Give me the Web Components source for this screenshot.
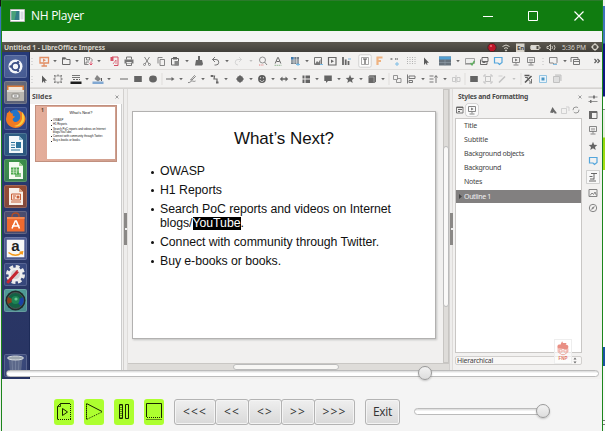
<!DOCTYPE html>
<html lang="en">
<head>
<meta charset="utf-8">
<title>NH Player</title>
<style>
html,body{margin:0;width:605px;height:431px;overflow:hidden;background:#fff;font-family:"Open Sans","Liberation Sans",sans-serif}
</style>
</head>
<body>
<desktop-view></desktop-view>
<script>
const ICONS = {
 drop:'<path d="M4.2 5h3.6L6 7.3z" fill="#555"/>',
 dropl:'<path d="M4.4 5h3.2L6 7z" fill="#bbb"/>',
 sep:'<path d="M6 0v12" stroke="#dddbd9"/>',
 grip:'<path d="M6 3v7" stroke="#bbb" stroke-dasharray="1 2"/>',
 impress:'<path d="M2 2.500h8.500v5.500H2zM6 8v3M3.500 11h5.500" fill="none" stroke="#e08050" stroke-width="1.300"/><path d="M5 3.500l3 1.700-3 1.700z" fill="#e08050"/>',
 folder:'<path d="M2.500 9.500v-6.500h3l1 1.500h3.500v5z" fill="none" stroke="#555"/><path d="M2 2.500h3.500v2H2z" fill="#555"/>',
 save:'<path d="M2.500 9.500v-7h5.500l2 2v2M2.500 9.500h4M4.500 3v2h3V3M4 9V7h3" fill="none" stroke="#666" stroke-width=".9"/><path d="M9 6.500v3.500M7.500 8.500L9 10l1.500-1.500" fill="none" stroke="#d35" stroke-width=".9"/>',
 pdf:'<path d="M4 2h6v8.500H6" fill="none" stroke="#d33a52"/><path d="M2.500 2h3v4h-3z" fill="#d33a52"/><path d="M5 9l3-4v4" fill="none" stroke="#d33a52" stroke-width=".7"/>',
 print:'<path d="M3.500 4.500v-2.500h5v2.500M3.500 7.500v3h5v-3" fill="none" stroke="#666"/><path d="M1.500 4.500h9v4h-9z" fill="#666"/><path d="M3.500 7.500h5" stroke="#eee"/>',
 cut:'<path d="M3.500 2l4.500 7M8.500 2L4 9" stroke="#666" stroke-width=".9"/><circle cx="3.500" cy="9.500" r="1" fill="none" stroke="#666" stroke-width=".8"/><circle cx="8.500" cy="9.500" r="1" fill="none" stroke="#666" stroke-width=".8"/>',
 copy:'<path d="M3 8.500V2.500h4.500M5 4.500h4.500v6H5z" fill="none" stroke="#777"/>',
 paste:'<path d="M2.500 3.500h7v6.500h-7z" fill="none" stroke="#555"/><path d="M4 2h4v2.500H4z" fill="#555"/><path d="M5.500 6H10v4.500H5.500z" fill="#777"/>',
 brush:'<path d="M5 1h2v4h2l1 4-1 1.500H2L3 5h2z" fill="#555"/>',
 undo:'<path d="M6 2L3.500 4.500 6 7M3.500 4.500H7a2.700 2.700 0 0 1 0 5.500H5.500" fill="none" stroke="#666"/>',
 redo:'<path d="M6 2l2.500 2.500L6 7M8.500 4.500H5A2.700 2.700 0 0 0 5 10" fill="none" stroke="#d0d0d0"/>',
 find:'<circle cx="5.500" cy="5" r="3" fill="none" stroke="#777" stroke-width=".9"/><path d="M7.500 7l2.500 3" stroke="#777"/><path d="M2 10h5" stroke="#e07070" stroke-dasharray="1 .7"/>',
 spell:'<path d="M3.200 8.500L5.700 2.500h.6L8.800 8.500M4.500 6.500h3" fill="none" stroke="#555"/><path d="M2.500 10.300h7" stroke="#8cb58c" stroke-dasharray="1.500 .5"/>',
 table:'<path d="M2 2h8v7H2z" fill="#62707d"/><path d="M2 2h3v3H2z" fill="#276aa6"/><path d="M2 5h8M2 7h8M5 2v7M7.600 2v7" stroke="#e7e7e7" stroke-width=".6"/><path d="M7 9.500h4M9 8v3" stroke="#65b4e8"/>',
 image:'<path d="M2.500 2.500h7v7h-7z" fill="none" stroke="#666"/><path d="M3 9l2-3 1.500 1.500L8.500 4v5.500" fill="#666"/><path d="M8 9.500h3" stroke="#6ab8e8"/>',
 video:'<path d="M2.500 2.500h7.500v7.500H2.500z" fill="none" stroke="#555" stroke-width="1.200"/><path d="M5 4.500l3 1.700-3 1.700z" fill="#555"/>',
 chart:'<path d="M3 2v8M5.700 4.500V10M8.500 6v4" stroke="#555" stroke-width="1.800"/><path d="M8 4h3" stroke="#69b1df"/>',
 textbox:'<rect x="-.2" y="-.2" width="12.400" height="12.400" rx="1.500" fill="#fff" stroke="#ccc"/><path d="M2.500 2.500h7v7h-7z" fill="none" stroke="#888" stroke-width=".8"/><path d="M4 4h4M6 4v5" stroke="#444" stroke-width="1.200"/>',
 fontwork:'<path d="M3.500 2.500h6M3.500 6H8M4.500 2v8" stroke="#efab72" stroke-width="2.200"/>',
 link:'<path d="M2.500 4h2.500M7 4h3" stroke="#888" stroke-width="1.800" stroke-dasharray="1.500 .6"/><path d="M7 9h4M9 7v4" stroke="#70b7e5"/>',
 grid:'<path d="M2.500 2v8M5 2v8M7.500 2v8M10 2v8" stroke="#aaa" stroke-dasharray="1 1"/>',
 pointer:'<path d="M4 2.500v7.500l1.800-2 1 2 .8-.5-.8-1.800H9z" fill="#444"/>',
 tblue:'<path d="M0 1.500h12v9H0z" fill="#55626e"/><path d="M0 1.500h12v3H0z" fill="#3e94cf"/><path d="M0 7.500h12M6 4.500v6" stroke="#8797a5" stroke-width=".6"/>',
 check:'<path d="M1.500 3.500h9v5h-9z" fill="#eee" stroke="#999"/><path d="M1 9h6" stroke="#777"/><path d="M6.500 8l1.500 1.800 2.500-4" fill="none" stroke="#4ca64c" stroke-width="1.500"/>',
 dup:'<path d="M4 2.500h6v4H4zM2.500 4.500V9.500h6.500V7M4.500 7.500h3" fill="none" stroke="#555"/>',
 bslide:'<path d="M2.500 2.500h7.500v5L7.500 9.500 6 8H2.500z" fill="none" stroke="#3c9bd8" stroke-width="1.200"/>',
 present:'<path d="M2.500 2.500h7v5h-7zM6 7.500v2M3.500 10h5" fill="none" stroke="#777"/><path d="M5.200 3.500L7.500 5 5.200 6.500z" fill="#555"/>',
 present2:'<path d="M2.500 2.500h7v5h-7zM6 7.500v2M3.500 10h5M5 4v2.500M7 4v2.500" fill="none" stroke="#777"/>',
 newslide:'<path d="M2.500 2.500h7.500v5L8 9.500 6 8H2.500z" fill="none" stroke="#777"/><path d="M6 9.500h4" stroke="#70b5e2"/>',
 slides:'<path d="M2 7V2.500h7V4M4.500 4.500h6v5h-6zM5 6.500h5" fill="none" stroke="#666"/>',
 more:'<path d="M3.500 4l2 2-2 2M6.500 4l2 2-2 2" fill="none" stroke="#444" stroke-width="1.200"/>',
 select:'<path d="M3 3h6v6H3z" fill="none" stroke="#888" stroke-width=".8"/><path d="M2 2h1.500v1.500H2zM8.500 2H10v1.500H8.500zM2 8.500h1.500V10H2zM8.500 8.500H10V10H8.500zM5.300 1.500h1.400V3H5.300zM5.300 9h1.400v1.500H5.300zM1.500 5.300H3v1.400H1.500zM9 5.300h1.500v1.400H9z" fill="#777"/>',
 lcolor:'<path d="M2 2.500h8M2 4.500h8" stroke="#666"/><path d="M3 6.500h7" stroke="#555" stroke-dasharray="2 1"/><path d="M.5 8.500h11v2.500H.5z" fill="#000"/>',
 fill:'<path d="M5 2l4 4-3 2.500L2.500 6z" fill="#777"/><path d="M9.500 5v3" stroke="#444"/><path d="M.5 8.500h11v2.500H.5z" fill="#729fcf"/>',
 line:'<path d="M2 6h8" stroke="#555"/>',
 rect:'<path d="M2.200 3h7.600v6H2.200z" fill="#505050"/>',
 ellipse:'<ellipse cx="6" cy="6" rx="3.900" ry="3.400" fill="#505050"/>',
 arrow:'<path d="M2 6h6" stroke="#555"/><path d="M7.500 4l3 2-3 2z" fill="#555"/>',
 curve:'<path d="M2 9.500c1.500 1 3-2 4.500-1.500s2 .5 3 0M4.500 7l4-4.500 1 1L6 7z" fill="none" stroke="#777"/>',
 conn:'<path d="M3 3h2.500l-.5 3h3v3.500" fill="none" stroke="#555" stroke-width="1.200"/><path d="M1.700 2H4v2H1.700zM7 8.500h2.500v2H7z" fill="#555"/>',
 diamond:'<path d="M6 2l4 4-4 4-4-4z" fill="#505050"/><path d="M3.500 3.500h5v5h-5z" fill="#505050"/>',
 smile:'<circle cx="6" cy="6" r="3.900" fill="#484848"/><path d="M4.600 4v1.400M7.400 4v1.400M4 7c1 2 3 2 4 0" fill="none" stroke="#eee" stroke-width=".8"/>',
 harrow:'<path d="M3 6h6" stroke="#505050" stroke-width="1.500"/><path d="M4.500 3.500v5L1.800 6zM7.500 3.500v5L10.200 6z" fill="#505050"/>',
 flow:'<path d="M2.500 2.500h2v3h-2zM5.500 2.500H10v3H5.500zM2.500 6.500h2V10h-2zM5.500 6.500H10V10H5.500z" fill="#505050"/>',
 callout:'<path d="M2.300 2.500H9.800v5.500H6L4 10V8H2.300z" fill="#505050"/>',
 star:'<path d="M6 1.800l1.200 2.900 3.100.2L8 7l.7 3L6 8.300 3.300 10 4 7 1.700 4.900l3.100-.2z" fill="#505050"/>',
 cube:'<path d="M2.500 3.500l1-1.200H10V8.500L8.500 10h-6z" fill="#555"/><path d="M3 4h5v5.500" fill="none" stroke="#aaa" stroke-width=".7"/>',
 rot:'<path d="M2.500 2.500h4v4h-4zM6 5.500h4v4H5.500V7" fill="none" stroke="#888"/>',
 align:'<path d="M2.500 1.500v9M4 3h6v2.500H4zM4 7.500h3.500v2H4z" fill="none" stroke="#666"/>',
 arr:'<path d="M2.500 3h4M2.500 6h4M2.500 9h4M9 10V3M7.500 4.500L9 2.500l1.500 2" fill="none" stroke="#666"/>',
 dist:'<path d="M2.500 4.500h3v4h-3zM7 4.500h3v4H7zM6 2v8" fill="none" stroke="#c4c4c4"/>',
 frame:'<path d="M3.500 3.500h5v5h-5zM2 4V2h2M8 2h2v2M10 8v2H8M4 10H2V8" fill="none" stroke="#bbb"/>',
 pen:'<path d="M3 9.500l6-6" stroke="#bbb" stroke-width="1.500"/><path d="M2.500 3h4" stroke="#ccc"/>',
 edit:'<path d="M2.500 2.500h5M3 9.500L9.500 3" stroke="#444" stroke-width="1.600"/><path d="M3 4.500h3M4 4l5 5.500M7 10h3M9.500 6v4" fill="none" stroke="#555" stroke-width=".9"/>',
 bbox:'<path d="M2.500 2.500h7v7h-7z" fill="#e9f5fd" stroke="#85bde0"/><path d="M4.500 4.500h3v3h-3z" fill="#3588bd"/>',
 gbox:'<path d="M2.500 3.500h6v6h-6zM4 2h6v6" fill="#ddd" stroke="#bbb"/>',
 newstyle:'<path d="M2.500 4.500h5v5h-5zM7 3h3v4" fill="none" stroke="#ccc"/>',
 sliders:'<path d="M1.500 4h9M1.500 8.500h9" stroke="#777" stroke-width=".9"/><path d="M6 2.500h2v3H6zM3 7h1.500v3H3z" fill="#666"/>',
 props:'<path d="M2.500 2.500H10v7H2.500z" fill="none" stroke="#555"/><path d="M2 2h8v2H2zM2 4h3v6H2z" fill="#555"/>',
 styles:'<path d="M4 2.500h6M7 2.500v6M2.500 5.500h3M2 10h7M3 8h4" fill="none" stroke="#555"/>',
 gallery:'<path d="M2 2.500h8v7H2z" fill="none" stroke="#777"/><path d="M3 8.500l2-2.500 1.500 1.500L8 5l1.500 3.500" fill="none" stroke="#777"/>',
 compass:'<circle cx="6" cy="6" r="3.700" fill="none" stroke="#777"/><path d="M8 4L6.500 6.800 4 8l1.300-2.700z" fill="#777"/>',
 list:'<path d="M2.500 3h6.500v6H2.500z" fill="none" stroke="#666"/><path d="M3 3.500h6M4 5.500h4M4 7.500h2" stroke="#555"/>',
 bucket:'<path d="M5.500 3l2 3 2 2.500v1H7.500L7 8 5.500 9 3 8.500z" fill="#555"/>',
 refresh:'<circle cx="6" cy="6" r="3" fill="none" stroke="#888" stroke-dasharray="7 2"/>',
 x:'<path d="M4.500 4.500l3 3M7.500 4.500l-3 3" stroke="#888" stroke-width=".9"/>'
};
function define(name, css, html, setup){
  customElements.define(name, class extends HTMLElement{
    connectedCallback(){
      if(this.shadowRoot) return;
      const r=this.attachShadow({mode:'open'});
      r.innerHTML='<style>*{box-sizing:border-box}'+css+'</style>'+(typeof html==='function'?html(this):html);
      if(setup) setup(this,r);
    }
  });
}
/* Text tracked out or in so that it fills the width given by "w". */
define('fit-text',':host{display:inline-block;white-space:pre}span{display:inline-block}','<span><slot></slot></span>',(el,r)=>{
  const w=+el.getAttribute('w'), s=r.querySelector('span');
  const n=[...el.textContent].length;
  s.style.letterSpacing=((w-s.getBoundingClientRect().width)/n).toFixed(4)+'px';
});
define('tool-icon',':host{display:block;flex:none;width:12px;height:12px}svg{display:block;overflow:visible;opacity:.88}',el=>`<svg width="12" height="12" viewBox="0 0 12 12">${ICONS[el.getAttribute('name')]}</svg>`);
/* items: "name centre" pairs, with centres measured along the bar */
define('tool-bar',':host{display:flex;align-items:center;height:18px;background:#f2f1f0;border-bottom:1px solid #e0dedc}',el=>{
  let pos=0;
  return el.getAttribute('items').split(',').map(p=>{
    const [n,c]=p.trim().split(' '); const m=c-6-pos; pos=+c+6;
    return `<tool-icon name="${n}" style="margin-left:${m}px"></tool-icon>`;
  }).join('');
});
const LAUNCH = {
 ubuntu:['#52679d','<circle cx="11.500" cy="11.500" r="7" fill="#f4f6fa"/><circle cx="11.500" cy="11.500" r="3.600" fill="none" stroke="#3d5087" stroke-width="1.900"/><circle cx="6.700" cy="11.500" r="1.300" fill="#3d5087"/><circle cx="14" cy="7.300" r="1.300" fill="#3d5087"/><circle cx="14" cy="15.700" r="1.300" fill="#3d5087"/>'],
 files:['#6f7078','<path d="M3 4.500h17v6H3z" fill="#d97a3a"/><path d="M4.500 6h14v4h-14z" fill="#f4e7d8"/><path d="M3 9h17v11H3z" fill="#b9b6b0"/><path d="M3 9h17v2H3z" fill="#dedbd5"/><rect x="8" y="13" width="7" height="4" rx=".8" fill="#eee" stroke="#88857f"/><path d="M10 15h3" stroke="#777"/>'],
 firefox:['#33488a','<circle cx="12" cy="11.500" r="9" fill="#2274c8"/><path d="M3 6c1 0 2-1 2.500-2.500C6.500 6 7 6.500 9 6.500c-1 2 0 3 2 3-1 2-3 1.500-2 4 2 3 6 1 7-2 1-4-1-6-3-8 5 0 9 5 8.500 9-1 5.500-5.500 8.500-10 8.500S2 17.500 2 12z" fill="#f27a22"/><path d="M18 5c3.500 4 3 9 0 12-2 2-5 3-8 2 5-1 7-4 8-7z" fill="#fbcb3d"/>'],
 writer:['#2e6285','<path d="M5 3h10l4 4v13H5z" fill="#f3f8fa"/><path d="M15 3l4 4h-4z" fill="#8dbbd2"/><path d="M7 9.500h4M7 12h4M7 14.500h4M7 17h9" stroke="#2d749c"/><path d="M12 9h5v6h-5z" fill="#2d749c"/>'],
 calc:['#3f9a45','<path d="M5 3h10l4 4v13H5z" fill="#f5faf2"/><path d="M15 3l4 4h-4z" fill="#9ad18d"/><path d="M7 8.500h8v7H7z" fill="#49a549"/><path d="M7 11h8M7 13.200h8M9.700 8.500v7M12.400 8.500v7" stroke="#e4f5df" stroke-width=".7"/><path d="M12 18v-3M14 18v-5M16 18v-4" stroke="#46a446" stroke-width="1.300"/>'],
 impress:['#a44f2c','<path d="M5 3h10l4 4v13H5z" fill="#f8efe9"/><path d="M15 3l4 4h-4z" fill="#dba184"/><path d="M7.500 9h9v6h-9z" fill="#fbe3d7" stroke="#c75e38"/><path d="M9 11h3M9 13h2M7 17h10" stroke="#c75e38"/><circle cx="14" cy="12" r="1.500" fill="#c75e38"/>'],
 software:['#50506f','<path d="M8 7V5c0-4 7-4 7 0v2" fill="none" stroke="#b34d25" stroke-width="1.300"/><path d="M3 6h17.500v14.500H3z" fill="#ee6a2f"/><path d="M3 6h17.500v2H3z" fill="#f58a52"/><path d="M8 17.500L11.300 10h1L15.500 17.500M8 15h7.500" fill="none" stroke="#fff" stroke-width="1.600"/>'],
 amazon:['#56649a','<path d="M2.800 2.800h17.500v17.500H2.800z" fill="#f7f7f7"/><path d="M4.500 15.500c4 3.500 10 3.500 13.500 0M15.500 15.200l3-.4-.5 2.700" fill="none" stroke="#f59a1c" stroke-width="1.500"/>'],
 settings:['#3b4d84','<circle cx="11.500" cy="11.500" r="8" fill="none" stroke="#e9e9e9" stroke-width="3" stroke-dasharray="3.800 2.480"/><circle cx="11.500" cy="11.500" r="5.800" fill="#d2d2d2" stroke="#efefef" stroke-width="2.500"/><path d="M4 19L13.500 8.500" stroke="#c5272f" stroke-width="3" stroke-linecap="round"/><path d="M13.500 8.500l1.500-4 2 2.500 3-1.500-2.500 4z" fill="#eee"/>'],
 lens:['#55ab9d','<circle cx="11.500" cy="11.500" r="10" fill="#222b2c"/><circle cx="11.500" cy="11.500" r="8" fill="#146144" stroke="#4b5656"/><path d="M11.500 11.500L4 8a8 8 0 0 0 0 7z" fill="#8d3d1c"/><path d="M11.500 11.500L19 8a8 8 0 0 1-2 9z" fill="#1a41a5"/><circle cx="11.500" cy="11" r="4" fill="#1e8554"/><circle cx="12" cy="10" r="1.600" fill="#6ac491"/>'],
 trash:['#3c4b7d','<path d="M4.500 4L6.500 23h10L18.500 4z" fill="#5c688a"/><path d="M8 6l1 16M11.500 6v16M15 6l-1 16" stroke="#727e9c"/><ellipse cx="11.500" cy="4" rx="8" ry="2" fill="#9da6ae" stroke="#d5dade"/>']
};
define('launch-icon',':host{display:grid;flex:none;width:23px;height:23px;border-radius:2px;overflow:hidden;box-shadow:inset 0 0 0 1px #ffffff28}svg,b{grid-area:1/1}b{font:bold 15px/18px "Liberation Sans",sans-serif;color:#222;text-align:center}',el=>{
  const n=el.getAttribute('name'),[c,p]=LAUNCH[n];
  return `<style>:host{background:radial-gradient(circle at 50% 30%,${c},${c}aa)}</style><svg width="23" height="23">${p}</svg>`+(n==='amazon'?'<b>a</b>':'');
});
define('side-launcher',':host{display:flex;flex-direction:column;align-items:center;gap:3px;width:28px;padding:3px 0 0 0;background:linear-gradient(#263a78,#2a3766 70%,#283463);overflow:hidden;border-right:1px solid #1d2b58}launch-icon:last-child{margin-top:39px}',
 Object.keys(LAUNCH).map(n=>`<launch-icon name="${n}"></launch-icon>`).join(''));
define('system-bar',':host{display:flex;align-items:center;height:10px;background:linear-gradient(#5b574e,#413f3a);color:#d8d4ca;font:bold 6.700px/10px "Noto Sans","Open Sans",sans-serif;padding:1px 3px 0 2px}svg{margin-left:auto;margin-right:5px}i{font-style:normal;font-weight:400}',
 `<fit-text w="101">Untitled 1 - LibreOffice Impress</fit-text>
 <svg width="70" height="10" fill="none" stroke="#d9d5cb"><circle cx="5" cy="4.500" r="4.200" fill="#bd1629" stroke="#402b28"/><circle cx="4" cy="3" r="1.100" fill="#ee6a72" stroke="none"/><path d="M15.500 3.500q3.500-3 7 0M17 5.500q2-1.700 4 0"/><circle cx="19" cy="7.500" r=".6" fill="#ddd"/><rect x="29" y=".5" width="8.500" height="8.500" fill="#d6d2c9" stroke="none"/><path d="M44 2.500h8v4h-8zM53 4v1.500"/><path d="M44 3h5v3h-5z" fill="#ddd"/><path d="M60 3.500h1.500l2-2v6l-2-2H60zM65 3q1 1.500 0 3M67 2q2 2.500 0 5" stroke-width=".9"/><text x="30" y="7.200" fill="#444" stroke="none" font-size="6">En</text></svg>
 <i><fit-text w="24">5:36 PM</fit-text></i><svg style="margin:0 0 0 5px" width="8" height="9"><circle cx="4" cy="4" r="2.500" fill="none" stroke="#d9d5cb" stroke-width="1.200"/><path d="M4 0v2M4 6v2M0 4h2M6 4h2" stroke="#d9d5cb"/></svg>`);
define('panel-head',':host{display:flex;align-items:center;justify-content:space-between;height:15px;color:#4a4a4a;font:bold 6.800px/14px "Noto Sans","Open Sans",sans-serif}','<slot></slot><tool-icon name="x"></tool-icon>');
define('slide-page',`:host{display:block;background:#fff;color:#111;font-weight:400;font-family:"Liberation Sans",Arial,sans-serif}
 h1{margin:0;font-weight:400;text-align:center;font-size:calc(17px*var(--k,1));line-height:calc(20px*var(--k,1));padding-top:calc(17px*var(--k,1))}
 ul{list-style:none;margin:calc(16px*var(--k,1)) 0 0;padding:0 0 0 calc(27px*var(--k,1));font-size:calc(12.300px*var(--k,1));line-height:calc(13.600px*var(--k,1))}
 li{display:flex;margin-bottom:calc(5.400px*var(--k,1))}li::before{content:"";flex:none;width:calc(3px*var(--k,1));height:calc(3px*var(--k,1));border-radius:50%;background:#111;margin:calc(5.500px*var(--k,1)) calc(6.500px*var(--k,1)) 0 calc(-9.500px*var(--k,1))}
 mark{background:#000;color:#fff;display:inline-block}div{white-space:nowrap}`,
 el=>{const k=+(el.getAttribute('k')||1),f=(t,w)=>`<fit-text w="${w*k}">${t}</fit-text>`;
 return `<style>:host{--k:${k}}</style><h1>${f('What’s Next?',100)}</h1><ul><li>${f('OWASP',45)}</li><li>${f('H1 Reports',62)}</li><li><div>${f('Search PoC reports and videos on Internet',231)}<br>${f('blogs/',32.500)}${k===1?'<mark>':''}${f('YouTube',48)}${k===1?'</mark>':''}.</div></li><li>${f('Connect with community through Twitter.',219)}</li><li>${f('Buy e-books or books.',121)}</li></ul>`;});
define('slides-panel',`:host{display:flex;flex-direction:column;width:93px;background:#f2f1f0}panel-head{padding-left:2px}
 .l{flex:1;background:#fff;border-right:1px solid #ccc;padding:1px 4px 0 5px;margin-right:1px}
 .t{display:flex;height:57px;background:linear-gradient(90deg,#e5ae9b,#cf9f8e);border:1px solid #c1907f;padding:1px 1px 2px 5px;font:bold 5px/7px "Noto Sans",sans-serif;color:#543;gap:3px}slide-page{width:69px;height:52px;overflow:hidden}`,
 `<panel-head><fit-text w="20">Slides</fit-text></panel-head><div class="l"><div class="t"><span>1</span><slide-page k=".228"></slide-page></div></div>`);
define('split-grip',':host{display:flex;flex-direction:column;width:5px;background:#eeedec;border-left:1px solid #d2d0ce;border-right:1px solid #dedcda;padding-top:124px}span{height:32px;width:3px;background:#8a8886;display:grid;place-items:center}span::after{content:"";width:2px;height:2px;background:#eee}','<span></span>');
define('edit-canvas',`:host{display:grid;grid-template:274px 7px/315px 6px;background:#f1f0ef}
 .c{padding:22px 0 0 4px}slide-page{width:304px;height:228px;border:1px solid #b2b1b0;box-shadow:1px 1px 2px #0003}
 .v{background:#dedcd9;border:1px solid #c7c5c2;display:flex;flex-direction:column;align-items:center;padding-top:56px}.v i{width:6px;height:161px;background:#faf9f8;border:1px solid #bbb;border-radius:3px}
 .h{grid-column:1/3;background:#dedcd9;border-top:1px solid #c9c7c4;display:flex;padding-left:105px}.h i{width:106px;height:6px;border:1px solid #bbb;border-radius:3px;background:#f8f7f5}`,
 `<div class="c"><slide-page></slide-page></div><div class="v"><i></i></div><div class="h"><i></i></div>`);
define('styles-panel',`:host{display:flex;flex-direction:column;width:133px;background:#f2f1f0;font:7px/14px "Noto Sans","Open Sans",sans-serif;color:#444}
 panel-head{padding:0 0 0 5px;height:15px}.b{display:flex;align-items:center;height:14px;padding:0 0 2px 1px}.b tool-icon:nth-child(3){margin-left:69px}.b tool-icon:nth-child(5){margin-left:-1px}
 .l{flex:1;background:#fff;border:1px solid #c9c7c5;margin:0 4px 0 2px;display:flex;flex-direction:column}.l div{padding-left:8px;height:14px}.l .s{background:#828080;color:#f2f2f2;padding-left:3px;display:flex;align-items:center;gap:2px;height:13px;margin-top:1px}.s svg{width:3px}
 .f{display:flex;justify-content:space-between;align-items:center;height:9px;margin:3px 4px 5px 2px;border:1px solid #d2d0ce;border-radius:2px;background:#f8f7f6;padding:0 4px 0 1px;line-height:8px}
 .m{align-self:flex-end;margin:auto 9px -12px 0;z-index:1;background:#fff9;border:1px solid #eee;width:18px;height:25px}`,
 `<panel-head><fit-text w="70">Styles and Formatting</fit-text></panel-head>
 <div class="b"><tool-icon name="list"></tool-icon><tool-icon name="present" style="background:#fafafa;box-shadow:0 0 0 .5px #bbb;border-radius:2px"></tool-icon><tool-icon name="bucket"></tool-icon><tool-icon name="newstyle"></tool-icon><tool-icon name="refresh"></tool-icon></div>
 <div class="l">${[['Title',13],['Subtitle',24],['Background objects',60],['Background',37],['Notes',18]].map(([t,w])=>`<div><fit-text w="${w}">${t}</fit-text></div>`).join('')}<div class="s"><svg height="5"><path d="M0 0l3 2.500L0 5z" fill="#444"/></svg><fit-text w="27">Outline 1</fit-text></div>
 <svg class="m" viewBox="0 0 18 25"><path d="M3 9c-1-4 1-5 3-4l2-4 1 2 4 0-1 2c3 0 4 2 2 5z" fill="#e98f84"/><path d="M3.500 9v4l4 3h3l4-3V9M4.500 10.500h3.500v2.500H5zM10 10.500h3.500v2.500H10z" fill="none" stroke="#e9a096"/><text x="9" y="22.500" font-family="Liberation Sans,sans-serif" font-size="5" font-weight="bold" fill="#e07468" text-anchor="middle">FNP</text></svg></div>
 <div class="f"><fit-text w="36">Hierarchical</fit-text><svg width="4" height="7"><path d="M.5 2.500L2 .5l1.500 2zM.5 4.500L2 6.500l1.500-2z" fill="#666"/></svg></div>`);
define('side-tabs',':host{display:flex;flex-direction:column;width:16px;padding:2px 0 0 1px;gap:3.600px;background:#f2f1f0}tool-icon:nth-child(2){margin-top:2px}.on{background:#f8f8f8;box-shadow:0 0 0 .8px #c8c8c8}',
 ['sliders','props','present2','star','bslide','styles','gallery','compass'].map(n=>`<tool-icon name="${n}"${n==='styles'?' class="on"':''}></tool-icon>`).join(''));
const T1='grip 2,impress 13.500,drop 25,folder 36,drop 47,save 58,drop 69,pdf 83.500,print 98.500,cut 116.500,copy 131,paste 145,drop 157,brush 169,undo 185,drop 197,redo 209,dropl 221,find 233,spell 247.500,table 265,drop 277,image 288,video 302,chart 316,textbox 334.500,fontwork 349,link 364,grid 381,pointer 395.500,tblue 415,drop 428,check 440,dup 454,bslide 468,present 486,present2 501,grip 512.500,newslide 523,drop 534.500,slides 545,more 567';
const T2='grip 2,pointer 14,select 28,lcolor 45.500,drop 57,fill 68,drop 79,line 93.500,rect 108,ellipse 122.500,sep 132,arrow 140,drop 151,curve 162,drop 173,conn 184.500,drop 195.500,diamond 209.500,drop 220.500,smile 231.500,drop 242.500,harrow 253.500,drop 264.500,flow 275.500,drop 286.500,callout 297.500,drop 308.500,star 319.500,drop 330.500,cube 341.500,drop 352.500,sep 359,rot 367,align 381,drop 392.500,arr 403,drop 414.500,dist 426,sep 435,rect 443.500,frame 458,pen 472,dropl 483.500,sep 491,edit 498,bbox 513,gbox 527';
define('video-frame',`:host{display:flex;flex-direction:column;width:600px;height:337px;background:#f4f4f4}
 .r{display:flex;flex:1;min-height:0}.app{flex:1;display:flex;flex-direction:column;min-width:0}.w{display:flex;height:282px;border-top:1px solid #d5d3d1}.app footer{height:9px;margin-top:auto;background:#f1f0ef}`,
 `<system-bar></system-bar><div class="r"><side-launcher></side-launcher><div class="app"><tool-bar items="${T1}"></tool-bar><tool-bar items="${T2}"></tool-bar>
 <div class="w"><slides-panel></slides-panel><split-grip></split-grip><edit-canvas></edit-canvas><split-grip style="width:4px"></split-grip><styles-panel></styles-panel><side-tabs></side-tabs></div><footer></footer></div></div>`);
define('title-bar',':host{display:flex;align-items:center;height:31px;background:#107c10;color:#fff;font:12px/31px "Open Sans",sans-serif;padding-left:8px;box-shadow:inset 0 1px #2b7a2b}.c{margin-left:auto;margin-right:14px}fit-text{margin-left:6px}',
 `<svg width="15" height="13"><path d="M.5.5h14v12H.5z" fill="#fff" stroke="#bbb"/><path d="M1.500 2h8v9h-8z" fill="#337c86"/><path d="M1.500 2h5l-2 9h-3z" fill="#49a178"/><path d="M10.500 2.500h3v8h-3z" fill="#d8dce2"/></svg><fit-text w="53">NH Player</fit-text>
 <svg class="c" width="107" height="12" fill="none" stroke="#fff"><path d="M2 6.500h10M47.500 1.500h9v9h-9z"/><path d="M93.500 1.500l9 9M102.500 1.500l-9 9" stroke-width="1.200"/></svg>`);
define('range-slider',':host{display:grid;align-items:center;height:16px}.t,.k{grid-area:1/1}.t{height:7px;border:1px solid #bbb;border-radius:4px;background:linear-gradient(#d8d8d8,#fff 45%,#fff);}.k{width:14px;height:14px;border-radius:50%;border:1px solid #999;background:linear-gradient(#f2f2f2,#ddd);box-shadow:0 1px 2px #0003}',
 el=>`<div class="t"></div><div class="k" style="margin-left:${el.getAttribute('at')}px"></div>`);
define('push-button',':host{display:flex;justify-content:center;align-items:center;height:26px;border:1px solid #b3b3b3;border-radius:3px;background:linear-gradient(#efefef,#d9d9d9);box-shadow:inset 0 0 0 1px #f4f4f4;color:#333;font:12px/24px "Open Sans",sans-serif}','<slot></slot>');
define('media-button',':host{display:grid;place-items:center;width:20px;height:26px;border-radius:3px;background:#adff2f}',el=>`<svg width="20" height="26" fill="none" stroke="#182400">${{
 open:'<path d="M3.500 20.500V7.500l3-3h9.500" /><path d="M6.500 4.500v3h-3" stroke-width=".8"/><path d="M16.500 5v15M4 20.500h13" stroke-dasharray="1 1"/><path d="M8.500 9.500v7l5-3.500z"/>',
 play:'<path d="M2.500 4.500L18 12.500"/><path d="M2.500 5v15.500L18 13" stroke-dasharray="1 1"/><path d="M2.500 5v15.500" stroke-width=".6"/>',
 pause:'<path d="M5.500 5.500h3v14h-3zM11.500 5.500h3v14h-3z"/><path d="M7 6v13" stroke-dasharray="1 1"/>',
 stop:'<path d="M2.500 18V4.500h15V18"/><path d="M3 18.500h15M2.500 20.500h15" stroke-dasharray="1 1"/>'}[el.getAttribute('name')]}</svg>`);
define('control-bar',`:host{display:flex;align-items:flex-start;padding:12px 0 0 52px}.m{display:flex;gap:10px}.g{display:flex;margin-left:10px}.g push-button+push-button{margin-left:-1px}range-slider{width:136px;margin:4px 0 0 14px}`,
 `<div class="m">${['open','play','pause','stop'].map(n=>`<media-button name="${n}"></media-button>`).join('')}</div>
 <div class="g">${[['&lt;&lt;&lt;',42,24],['&lt;&lt;',34,16],['&lt;&gt;',34,16],['&gt;&gt;',34,16],['&gt;&gt;&gt;',41,24]].map(([t,w,f])=>`<push-button style="width:${w}px"><fit-text w="${f}">${t}</fit-text></push-button>`).join('')}</div>
 <push-button style="width:35px;margin-left:10px"><fit-text w="19">Exit</fit-text></push-button><range-slider at="122"></range-slider>`);
define('player-window',`:host{display:flex;flex-direction:column;width:600px;height:431px;background:#f4f4f4}video-frame{margin-top:11px}.s{height:8px}range-slider{position:relative;top:-14px;margin:0 3px 0 4px}`,
 `<title-bar></title-bar><video-frame></video-frame><div class="s"><range-slider at="412"></range-slider></div><control-bar></control-bar>`);
define('desktop-view',`:host{display:flex;width:605px;height:431px}.a{width:2px;border-right:1px solid #1c861c;background:linear-gradient(#111 6px,#3974bd 7px,#3974bd 120px,#eee 121px)}
 .z{width:3px;border-left:1px solid #1c861c;background:linear-gradient(#eee 6px,#3f6fbb 6px,#4479bd 43px,#101583 44px,#101583 96px,#fff 97px,#fff 109px,#888 109px,#888 110px,#eee 110px,#e8eedc 137px,#92d60c 138px,#a9df16 170px,#fff 170px,#fff 347px,#1c52a3 347px,#1c52a3 366px,#f8f8f8 366px,#f8f8f8 420px,#777 420px,#777 421px,#f8f8f8 421px,#f8f8f8 424px,#777 424px,#777 425px,#f8f8f8 425px)}`,
 '<div class="a"></div><player-window></player-window><div class="z"></div>');
</script>
</body>
</html>
